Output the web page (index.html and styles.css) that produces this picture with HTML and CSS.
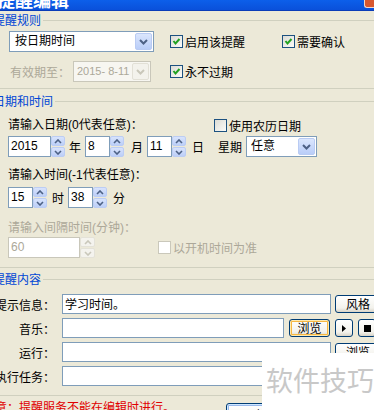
FILE: index.html
```html
<!DOCTYPE html>
<html>
  <head>
    <meta charset="utf-8">
    <title>提醒编辑</title>
    <link rel="stylesheet" href="styles.css">
  </head>
  <body>
    <div class="titlebar">
      <span class="title">提醒编辑</span>
      <span class="close"></span>
    </div>

    <div class="dialog">
      <!-- rule -->
      <fieldset class="group rules">
        <legend>提醒规则</legend>
        <div class="rules_grid">
          <div class="combo wide">
            <span class="combo_text">按日期时间</span>
            <span class="combo_btn"><svg width="9" height="6" viewBox="0 0 9 6"><path d="M1 1 L4.5 4.5 L8 1"/></svg></span>
          </div>
          <label class="check"><span class="box"><svg width="9" height="9" viewBox="0 0 9 9"><path d="M1.5 4 L3.5 6.5 L7.5 2"/></svg></span>启用该提醒</label>
          <label class="check"><span class="box"><svg width="9" height="9" viewBox="0 0 9 9"><path d="M1.5 4 L3.5 6.5 L7.5 2"/></svg></span>需要确认</label>

          <div class="expire">
            <span class="muted expire_label">有效期至：</span>
            <div class="combo date disabled">
              <span class="combo_text">2015- 8-11</span>
              <span class="combo_btn"><svg width="9" height="6" viewBox="0 0 9 6"><path d="M1 1 L4.5 4.5 L8 1"/></svg></span>
            </div>
          </div>
          <label class="check"><span class="box"><svg width="9" height="9" viewBox="0 0 9 9"><path d="M1.5 4 L3.5 6.5 L7.5 2"/></svg></span>永不过期</label>
        </div>
      </fieldset>

      <!-- date and time -->
      <fieldset class="group datetime">
        <legend>日期和时间</legend>
        <div class="row_a">
          <span class="caption">请输入日期(0代表任意)：</span>
          <label class="check"><span class="box"></span>使用农历日期</label>
        </div>

        <div class="spin_row date_row">
          <span class="edit year">2015</span>
          <span class="spin"><span class="spin_btn"><svg width="8" height="5" viewBox="0 0 8 5"><path d="M1 4 L4 1 L7 4"/></svg></span><span class="spin_btn"><svg width="8" height="5" viewBox="0 0 8 5"><path d="M1 1 L4 4 L7 1"/></svg></span></span>
          <span class="unit u_year">年</span>
          <span class="edit short">8</span>
          <span class="spin"><span class="spin_btn"><svg width="8" height="5" viewBox="0 0 8 5"><path d="M1 4 L4 1 L7 4"/></svg></span><span class="spin_btn"><svg width="8" height="5" viewBox="0 0 8 5"><path d="M1 1 L4 4 L7 1"/></svg></span></span>
          <span class="unit u_month">月</span>
          <span class="edit short">11</span>
          <span class="spin"><span class="spin_btn"><svg width="8" height="5" viewBox="0 0 8 5"><path d="M1 4 L4 1 L7 4"/></svg></span><span class="spin_btn"><svg width="8" height="5" viewBox="0 0 8 5"><path d="M1 1 L4 4 L7 1"/></svg></span></span>
          <span class="unit u_day">日</span>
          <span class="unit u_week">星期</span>
          <div class="combo week">
            <span class="combo_text">任意</span>
            <span class="combo_btn"><svg width="9" height="6" viewBox="0 0 9 6"><path d="M1 1 L4.5 4.5 L8 1"/></svg></span>
          </div>
        </div>

        <div class="caption time_caption">请输入时间(-1代表任意)：</div>

        <div class="spin_row time_row">
          <span class="edit short">15</span>
          <span class="spin"><span class="spin_btn"><svg width="8" height="5" viewBox="0 0 8 5"><path d="M1 4 L4 1 L7 4"/></svg></span><span class="spin_btn"><svg width="8" height="5" viewBox="0 0 8 5"><path d="M1 1 L4 4 L7 1"/></svg></span></span>
          <span class="unit u_hour">时</span>
          <span class="edit short">38</span>
          <span class="spin"><span class="spin_btn"><svg width="8" height="5" viewBox="0 0 8 5"><path d="M1 4 L4 1 L7 4"/></svg></span><span class="spin_btn"><svg width="8" height="5" viewBox="0 0 8 5"><path d="M1 1 L4 4 L7 1"/></svg></span></span>
          <span class="unit u_min">分</span>
        </div>

        <div class="caption muted gap_caption">请输入间隔时间(分钟)：</div>

        <div class="spin_row gap_row">
          <span class="edit interval disabled">60</span>
          <span class="spin disabled"><span class="spin_btn"><svg width="8" height="5" viewBox="0 0 8 5"><path d="M1 4 L4 1 L7 4"/></svg></span><span class="spin_btn"><svg width="8" height="5" viewBox="0 0 8 5"><path d="M1 1 L4 4 L7 1"/></svg></span></span>
          <label class="check disabled boot"><span class="box"></span>以开机时间为准</label>
        </div>
      </fieldset>

      <!-- content -->
      <fieldset class="group content">
        <legend>提醒内容</legend>
        <div class="field">
          <span class="field_label">提示信息：</span>
          <span class="edit long">学习时间。</span>
          <button class="btn style_btn">风格</button>
        </div>
        <div class="field">
          <span class="field_label">音乐：</span>
          <span class="edit music"></span>
          <button class="btn browse hot">浏览</button>
          <button class="btn square"><svg width="4" height="7" viewBox="0 0 4 7"><path d="M0 0 L4 3.5 L0 7 Z"/></svg></button>
          <button class="btn square"><svg width="7" height="7" viewBox="0 0 7 7"><rect width="7" height="7"/></svg></button>
        </div>
        <div class="field">
          <span class="field_label">运行：</span>
          <span class="edit long"></span>
          <button class="btn style_btn">浏览</button>
        </div>
        <div class="field">
          <span class="field_label">执行任务：</span>
          <span class="edit long"></span>
        </div>
      </fieldset>

      <div class="footer">
        <span class="notice">注意：提醒服务不能在编辑时进行。</span>
        <button class="btn ok">确定</button>
      </div>
    </div>

    <div class="watermark">软件技巧</div>
  </body>
</html>
```

FILE: styles.css
```css
html,
body {
  overflow: hidden;
}

body {
  margin: 0;
  width: 374px;
  height: 410px;
  background: #ece9d8;
  font-family: "Liberation Sans", "Noto Sans CJK SC", sans-serif;
  font-size: 12px;
  color: #000;
}

/* title bar, only its lower edge shows */
.titlebar {
  height: 10px;
  display: flex;
  justify-content: space-between;
  align-items: flex-start;
  overflow: hidden;
  background: linear-gradient(#0c5fea, #0a50da);
  border-bottom: 1px solid #0a3cb8;
}

.title {
  color: white;
  font-family: "Noto Sans CJK SC", sans-serif;
  font-weight: bold;
  font-size: 18px;
  line-height: 18px;
  margin: -10px 0 0 -3px;
}

.close {
  width: 9px;
  height: 7px;
  background: #d8572e;
  border-left: 1px solid #f4d6c8;
  border-bottom: 1px solid #f4d6c8;
  border-bottom-left-radius: 3px;
}

.dialog {
  width: 420px;
  padding-top: 2px;
}

/* group boxes */
.group {
  margin: 0 0 0 -6px;
  padding: 4px 0 6px 13px;
  border: 1px solid #d0d0bf;
  border-radius: 3px;
  min-width: 0;
}

.group legend {
  color: #0046d5;
  font-family: "Noto Sans CJK SC", sans-serif;
  line-height: 14px;
  padding: 0 2px;
  margin-left: -17px;
}

.datetime {
  margin-top: 5px;
  padding-top: 9px;
  padding-bottom: 9px;
}

.content {
  margin-top: 4px;
  padding-top: 8px;
  padding-bottom: 9px;
}

.muted {
  color: #aca899;
}

/* rules group */
.rules_grid {
  display: grid;
  grid-template-columns: 162px 112px auto;
  grid-auto-rows: 21px;
  row-gap: 9px;
  align-items: center;
}

.expire {
  display: flex;
  align-items: center;
}

.expire_label {
  width: 63px;
  margin-left: 2px;
}

/* combo boxes */
.combo {
  box-sizing: border-box;
  height: 21px;
  display: flex;
  align-items: stretch;
  padding: 1px;
  border: 1px solid #7f9db9;
  background: white;
}

.combo_text {
  flex: 1;
  padding-left: 3px;
  line-height: 17px;
  white-space: nowrap;
  overflow: hidden;
}

.combo_btn {
  width: 15px;
  display: flex;
  align-items: center;
  justify-content: center;
  border: 1px solid #b9cbf3;
  border-radius: 2px;
  background: linear-gradient(#dbe6fd, #b9cdf8);
}

.combo_btn svg path {
  fill: none;
  stroke: #4d6185;
  stroke-width: 2;
}

.wide {
  width: 145px;
  margin-left: 1px;
}

.wide .combo_text {
  padding-left: 4px;
}

.date {
  width: 78px;
}

.date .combo_text {
  font-size: 11px;
  padding-left: 2px;
}

.week {
  width: 71px;
}

.combo.disabled {
  border-color: #c9c7ba;
  background: #f7f6f1;
  color: #aca899;
}

.combo.disabled .combo_btn {
  border-color: #e2e0d6;
  background: #f3f2ec;
}

.combo.disabled .combo_btn svg path {
  stroke: #c9c7ba;
}

/* check boxes */
.check {
  display: flex;
  align-items: center;
  white-space: nowrap;
  font-family: "Noto Sans CJK SC", sans-serif;
}

.box {
  box-sizing: border-box;
  width: 13px;
  height: 13px;
  margin-right: 2px;
  display: flex;
  align-items: center;
  justify-content: center;
  border: 1px solid #1c5180;
  background: linear-gradient(135deg, #dcdcd5, #fbfbf8);
}

.box svg path {
  fill: none;
  stroke: #21a121;
  stroke-width: 2;
}

.check.disabled {
  color: #aca899;
}

.check.disabled .box {
  border-color: #cac8bb;
  background: white;
}

/* date and time group */
.row_a {
  display: flex;
  align-items: center;
  height: 16px;
}

.caption {
  line-height: 14px;
  white-space: nowrap;
}

.row_a .caption {
  width: 206px;
}

.spin_row {
  display: flex;
  align-items: center;
  height: 21px;
}

.date_row {
  margin-top: 3px;
}

.time_caption {
  margin-top: 11px;
}

.time_row {
  margin-top: 5px;
}

.gap_caption {
  margin-top: 13px;
}

.gap_row {
  margin-top: 2px;
}

.edit {
  box-sizing: border-box;
  height: 21px;
  padding-left: 2px;
  line-height: 19px;
  border: 1px solid #7f9db9;
  background: white;
  white-space: nowrap;
}

.year {
  width: 43px;
}

.short {
  width: 25px;
}

.interval {
  width: 72px;
}

.edit.disabled {
  border-color: #c9c7ba;
  color: #aca899;
}

.spin {
  width: 14px;
  height: 21px;
  display: flex;
  flex-direction: column;
  gap: 1px;
}

.spin_btn {
  flex: 1;
  display: flex;
  align-items: center;
  justify-content: center;
  border: 1px solid #bccdf4;
  border-radius: 2px;
  background: linear-gradient(#d8e3fc, #bccff8);
}

.spin_btn svg path {
  fill: none;
  stroke: #4d6185;
  stroke-width: 1.6;
}

.spin.disabled {
  width: 15px;
}

.spin.disabled .spin_btn {
  border-color: #e4e2d8;
  background: #f4f3ee;
}

.spin.disabled .spin_btn svg path {
  stroke: #c9c7ba;
}

.unit {
  font-family: "Noto Sans CJK SC", sans-serif;
  white-space: nowrap;
}

.u_year {
  margin: 0 4px;
}

.u_month {
  margin: 0 4px 0 7px;
}

.u_day {
  margin-left: 6px;
}

.u_week {
  margin: 0 4px 0 14px;
}

.u_hour {
  margin: 0 4px 0 5px;
}

.u_min {
  margin-left: 6px;
}

.boot {
  margin-left: 63px;
}

/* content group */
.field {
  display: flex;
  align-items: center;
  height: 20px;
}

.field + .field {
  margin-top: 4px;
}

.field_label {
  width: 60px;
  margin: 0 7px 0 -13px;
  text-align: right;
  white-space: nowrap;
  font-family: "Noto Sans CJK SC", sans-serif;
}

.field .edit {
  height: 20px;
  line-height: 18px;
  font-family: "Noto Sans CJK SC", sans-serif;
}

.long {
  width: 269px;
}

.music {
  width: 222px;
}

.btn {
  box-sizing: border-box;
  height: 18px;
  padding: 0;
  border: 1px solid #003c74;
  border-radius: 3px;
  background: linear-gradient(#ffffff, #f3f2ec 75%, #d8d3c6);
  font-family: "Noto Sans CJK SC", sans-serif;
  font-size: 12px;
  line-height: 16px;
  color: #000;
  display: flex;
  align-items: center;
  justify-content: center;
}

.style_btn {
  width: 46px;
  margin-left: 4px;
}

.browse {
  width: 41px;
  margin-left: 5px;
}

.hot {
  box-shadow: inset 0 0 0 1px #ffeab0, inset 0 0 0 2px #f6b843;
}

.square {
  width: 18px;
  margin-left: 5px;
}

.square svg {
  fill: #000;
}

/* footer */
.footer {
  display: flex;
  align-items: flex-start;
  margin-top: 4px;
}

.notice {
  width: 232px;
  margin-left: -6px;
  text-indent: -11px;
  color: #e00000;
  line-height: 14px;
  white-space: nowrap;
  font-family: "Noto Sans CJK SC", sans-serif;
}

.ok {
  width: 75px;
  height: 23px;
  margin-top: 3px;
  box-shadow: inset 0 0 0 1px #cee7ff, inset 0 0 0 2px #98b8ea;
}

/* the white stamp over the lower right corner */
.watermark {
  position: absolute;
  left: 262px;
  top: 353px;
  right: 0;
  bottom: 0;
  padding: 12px 0 0 4px;
  background: white;
  color: #c8c8c8;
  font-family: "Noto Sans CJK SC", sans-serif;
  font-size: 27px;
  line-height: 30px;
  white-space: nowrap;
  overflow: hidden;
}
```
